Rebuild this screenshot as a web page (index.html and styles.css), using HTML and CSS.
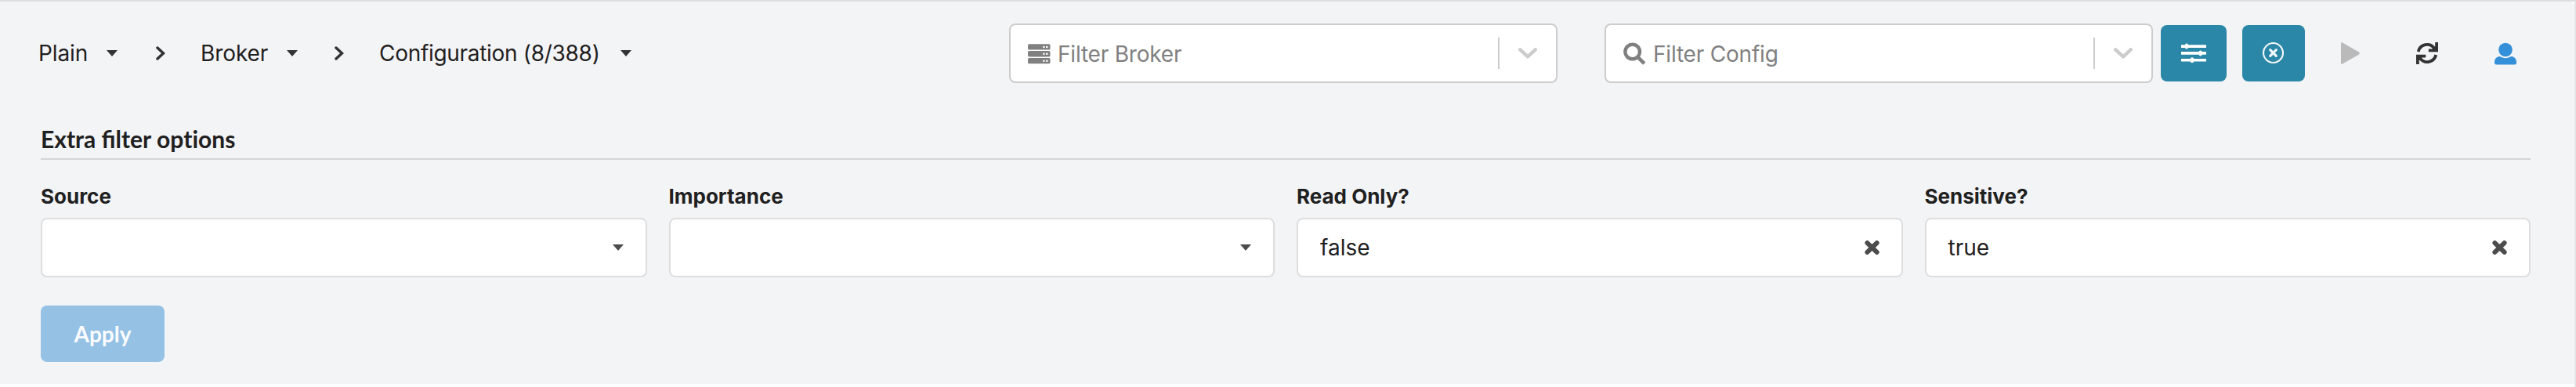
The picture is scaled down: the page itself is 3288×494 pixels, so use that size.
FILE: index.html
```
<!DOCTYPE html>
<html lang="en">
<head>
<meta charset="utf-8">
<title>Configuration</title>
<link rel="stylesheet" href="styles.css">
</head>
<body>
<div class="frame">
<main class="panel">
  <header class="toolbar">
    <nav class="crumbs">
      <span class="crumb crumb-first">Plain<svg class="caret" viewBox="0 0 14 8"><path d="M0 0H14L7 8Z"/></svg></span>
      <svg class="sep" viewBox="0 0 12 18"><path d="M2 2L9.500 9L2 16"/></svg>
      <span class="crumb crumb-mid">Broker<svg class="caret" viewBox="0 0 14 8"><path d="M0 0H14L7 8Z"/></svg></span>
      <svg class="sep" viewBox="0 0 12 18"><path d="M2 2L9.500 9L2 16"/></svg>
      <span class="crumb crumb-last">Configuration (8/388)<svg class="caret" viewBox="0 0 14 8"><path d="M0 0H14L7 8Z"/></svg></span>
    </nav>
    <div class="select">
      <svg class="select-icon" viewBox="0 0 29 29"><g fill="#808080"><rect x="0" y="2.300" width="28.500" height="7.300" rx="1.600"/><rect x="0" y="11.100" width="28.500" height="7.300" rx="1.600"/><rect x="0" y="20" width="28.500" height="7.300" rx="1.600"/></g><g fill="#fff"><circle cx="20.400" cy="6" r="1.300"/><circle cx="24.200" cy="6" r="1.300"/><circle cx="20.400" cy="14.800" r="1.300"/><circle cx="24.200" cy="14.800" r="1.300"/><circle cx="20.400" cy="23.700" r="1.300"/><circle cx="24.200" cy="23.700" r="1.300"/></g></svg>
      <span class="placeholder">Filter Broker</span>
      <span class="divider"></span>
      <svg class="chevron" viewBox="0 0 24 14"><path d="M2.300 2.300L12 11.300L21.700 2.300"/></svg>
    </div>
    <div class="select select-config">
      <svg class="select-icon" viewBox="0 0 29 29"><g fill="none" stroke="#808080"><circle cx="11.700" cy="12" r="9.300" stroke-width="4.400"/><path d="M18.500 18.800L26.800 27.100" stroke-width="4.600"/></g></svg>
      <span class="placeholder">Filter Config</span>
      <span class="divider"></span>
      <svg class="chevron" viewBox="0 0 24 14"><path d="M2.300 2.300L12 11.300L21.700 2.300"/></svg>
    </div>
    <button class="tool tool-sliders"><svg width="32" height="26" viewBox="0 0 32 26"><path fill="#fff" d="M0 2.300H32V5.900H0ZM0 11.100H32V14.700H0ZM0 19.900H32V23.500H0Z"/><g fill="#fff"><rect x="5" y=".6" width="4" height="7" rx="1.800"/><rect x="22.700" y="9.400" width="4" height="7" rx="1.800"/><rect x="12" y="18.200" width="4" height="7" rx="1.800"/></g></svg></button>
    <button class="tool tool-clear"><svg width="28" height="28" viewBox="0 0 28 28"><g fill="none" stroke="#f0f7fa"><circle cx="13.500" cy="13.500" r="12.500" stroke-width="2.200"/><path d="M9.700 9.700L17.300 17.300M17.300 9.700L9.700 17.300" stroke-width="3.200" stroke-linecap="round"/></g></svg></button>
    <svg class="play" viewBox="0 0 24 28"><path fill="#bababa" d="M0 1.500Q0-.6 2 .6L23 12.600Q24.500 14 23 15.400L2 27.400Q0 28.600 0 26.500Z"/></svg>
    <svg class="refresh" viewBox="0 0 28 28"><g fill="none" stroke="#333" stroke-width="3.800"><path d="M2.800 12A11.300 11.300 0 0 1 23 7.600"/><path d="M25.200 16A11.300 11.300 0 0 1 5 20.400"/></g><path fill="#333" d="M24.200 0H28V12.200H15.800V8.600H20.400L22 7L24.200 5ZM3.800 28H0V15.800H12.200V19.400H7.600L6 21L3.800 23Z"/></svg>
    <svg class="user" viewBox="0 0 28 28"><g fill="#3490d8"><circle cx="14" cy="9" r="8.800"/><path d="M0 25.500V25C0 20.500 3 17.600 7 17.600C11 20.300 17 20.300 21 17.600C25 17.600 28 20.500 28 25V25.500Q28 28 25.500 28H2.500Q0 28 0 25.500Z"/></g></svg>
  </header>
  <section class="options">
    <h2 class="options-title">Extra filter op<span class="plain-letters">tions</span></h2>
    <div class="fields">
      <div class="field"><label class="label">Source</label><div class="dropdown"><span></span><svg class="caret" viewBox="0 0 14 8"><path d="M0 0H14L7 8Z"/></svg></div></div>
      <div class="field"><label class="label">Importance</label><div class="dropdown"><span></span><svg class="caret" viewBox="0 0 14 8"><path d="M0 0H14L7 8Z"/></svg></div></div>
      <div class="field"><label class="label">Read Only?</label><div class="dropdown"><span>false</span><svg class="clear" viewBox="0 0 19 18"><path d="M3.400 3.100L15.600 14.900M15.600 3.100L3.400 14.900"/></svg></div></div>
      <div class="field"><label class="label">Sensitive?</label><div class="dropdown"><span>true</span><svg class="clear" viewBox="0 0 19 18"><path d="M3.400 3.100L15.600 14.900M15.600 3.100L3.400 14.900"/></svg></div></div>
    </div>
    <button class="apply">Apply</button>
  </section>
</main>
</div>
</body>
</html>
```
FILE: styles.css
```
* { box-sizing: border-box; }
body {
  margin: 0;
  color: #1f2020;
  font: 28px/36px Inter, "Liberation Sans", sans-serif;
}
.frame {
  height: 494px;
  background: #fff;
  border-top: 2px solid #dcddde;
  border-right: 2px solid #e3e4e6;
}
.panel {
  height: 488px;
  background: #f3f4f6;
  border-radius: 2px 8px 0 0;
}
.toolbar {
  display: flex;
  align-items: center;
  height: 132px;
  padding-left: 49px;
}
.crumbs {
  display: flex;
  align-items: center;
  width: 1239px;
  white-space: nowrap;
  letter-spacing: -0.1px;
}
.crumb { display: flex; align-items: center; justify-content: space-between; }
.crumb-first { width: 101px; margin-right: 49px; }
.crumb-mid { width: 124px; margin: 0 47px 0 45px; }
.crumb-last { width: 322px; margin-left: 45px; letter-spacing: -0.3px; }
.caret { width: 14px; height: 8px; fill: #333; }
.sep { width: 12px; height: 18px; fill: none; stroke: #333; stroke-width: 3.5; stroke-linecap: round; }
.select {
  display: flex;
  align-items: center;
  width: 700px;
  height: 76px;
  padding: 0 24px 0 22px;
  background: #fff;
  border: 2px solid #ccc;
  border-radius: 8px;
}
.select-config { margin-left: 60px; }
.select-icon { width: 29px; height: 29px; margin-right: 9px; }
.placeholder { flex: 1; padding-top: 2px; color: #808080; letter-spacing: -0.2px; }
.divider { width: 2px; height: 40px; background: #ccc; }
.chevron { width: 24px; height: 14px; margin-left: 24px; fill: none; stroke: #ccc; stroke-width: 4.4; stroke-linecap: round; stroke-linejoin: round; }
.tool {
  display: flex;
  align-items: center;
  justify-content: center;
  height: 72px;
  padding: 0;
  border: 0;
  border-radius: 8px;
  background: #2b87a7;
}
.tool-sliders { width: 84px; margin-left: 10px; }
.tool-clear { width: 80px; margin-left: 20px; }
.play { width: 24px; height: 28px; margin-left: 46px; }
.refresh { width: 28px; height: 28px; margin-left: 72px; }
.user { width: 28px; height: 29px; margin-left: 72px; }
.options { padding: 25px 56px 0 52px; }
.options-title {
  height: 45px;
  margin: 0;
  border-bottom: 2px solid #d4d5d6;
  font: 700 30px/36px Lato, sans-serif;
}
.plain-letters { font-variant-ligatures: none; }
.fields { display: grid; grid-template-columns: repeat(4, 1fr); gap: 28px; padding-top: 28px; }
.label { display: block; height: 46px; font-size: 26px; font-weight: 700; line-height: 38px; }
.dropdown {
  display: flex;
  align-items: center;
  justify-content: space-between;
  height: 76px;
  padding: 0 28px;
  background: #fff;
  border: 2px solid #dededf;
  border-radius: 8px;
}
.dropdown .caret { fill: #4c4c4c; }
.clear { width: 19px; height: 18px; fill: none; stroke: #4c4c4c; stroke-width: 6; stroke-linecap: round; }
.apply {
  display: block;
  width: 158px;
  height: 72px;
  margin-top: 36px;
  padding: 0;
  border: 0;
  border-radius: 8px;
  background: #95c1e5;
  color: #fafcfe;
  font: 700 28px/36px Lato, sans-serif;
}
```
